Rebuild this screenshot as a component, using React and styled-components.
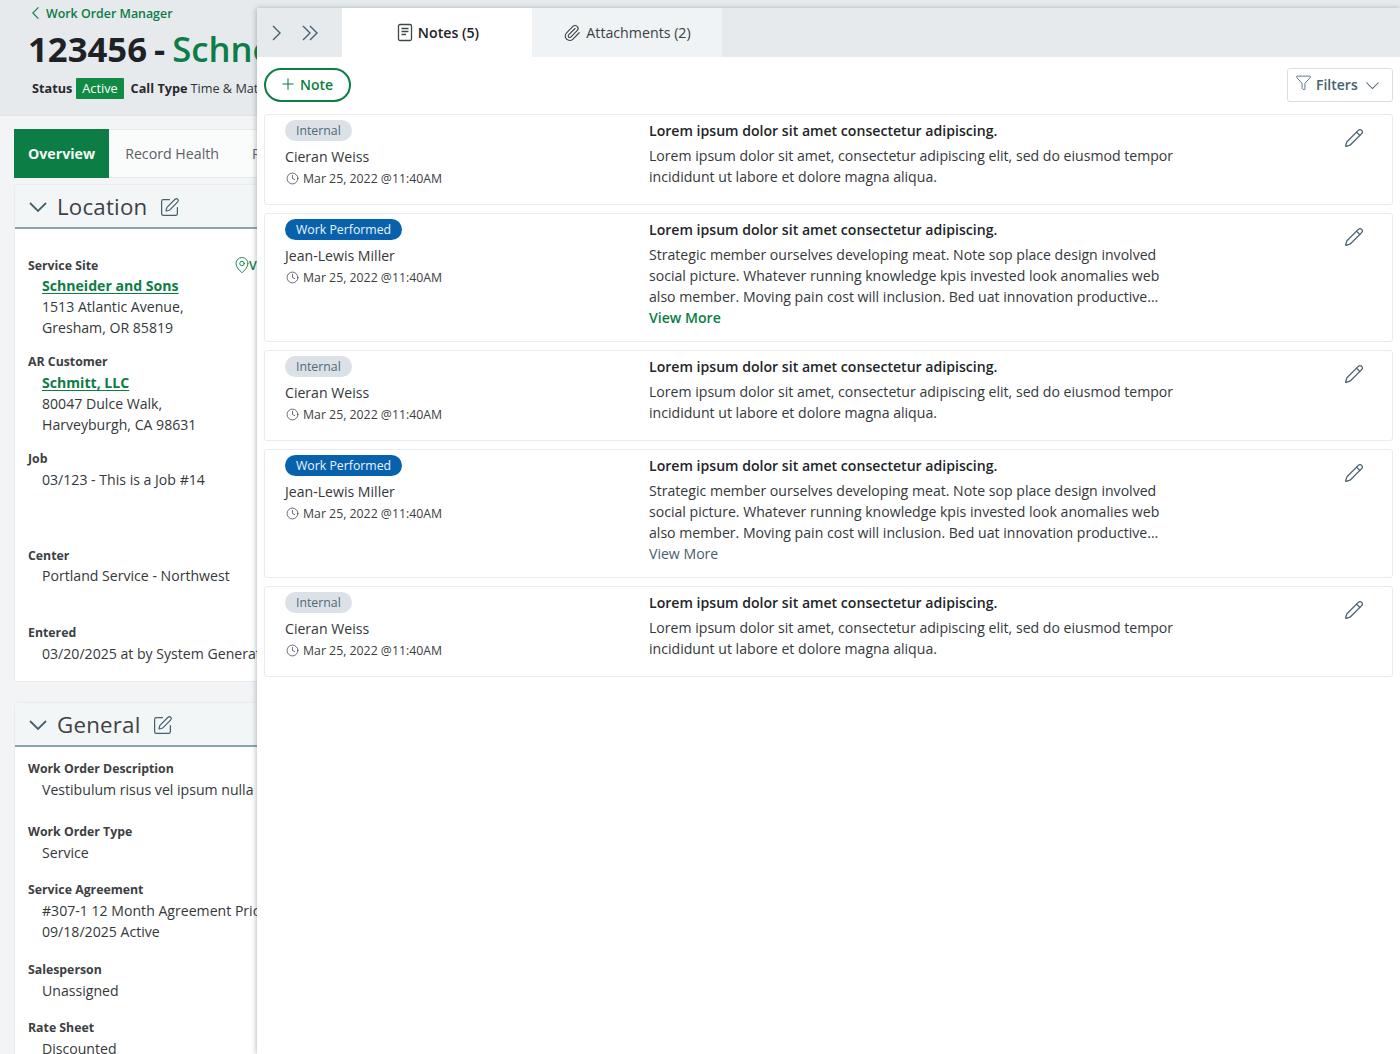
import React from "react";
import styled, { createGlobalStyle } from "styled-components";
import { Clock, Paperclip, Pencil, Plus, Funnel, SquarePen, MapPin } from "lucide-react";

const GREEN = "#0b7d45";
const SLATE = "#47606f";

const Global = createGlobalStyle`
  html, body { margin: 0; padding: 0; height: 100%; overflow: hidden; }
  body { font-family: "Open Sans", "Liberation Sans", sans-serif; color: #2f3437; background: #f2f4f6; }
  * { box-sizing: border-box; }
`;

const Page = styled.div`
  position: relative;
  width: 1400px;
  height: 1054px;
  overflow: hidden;
`;

const Main = styled.div`
  width: 100%;
`;

const Header = styled.header`
  height: 116px;
  background: #e6eaed;
  border-bottom: 1px solid #dfe3e6;
  padding: 4px 0 0 32px;
`;

const Back = styled.a`
  display: flex;
  align-items: center;
  gap: 2px;
  height: 18px;
  margin-left: -4px;
  font-size: 12.4px;
  font-weight: 600;
  color: ${GREEN};
`;

const Title = styled.h1`
  margin: 5px 0 0 -4px;
  font-size: 34.7px;
  line-height: 44px;
  font-weight: 700;
  word-spacing: -2px;
  color: #1e2225;
  white-space: nowrap;
  span { color: ${GREEN}; font-weight: 600; }
`;

const StatusRow = styled.div`
  display: flex;
  align-items: center;
  height: 22px;
  margin-top: 6px;
  font-size: 12.7px;
  white-space: nowrap;
  b { font-weight: 700; color: #26292c; margin-right: 3px; }
`;

const ActiveTag = styled.span`
  background: #108a45;
  color: #fff;
  border-radius: 1px;
  padding: 0 6px;
  line-height: 21px;
  margin: 0 7px 0 1px;
`;

const Body = styled.div`
  padding: 13px 0 0 14px;
`;

const TabBar = styled.div`
  display: flex;
  height: 49px;
  background: #fafbfb;
  border: 1px solid #e6eaed;
  border-left: 0;
`;

const MainTab = styled.div`
  display: flex;
  align-items: center;
  padding: 0 ${(p) => (p.$active ? "14px" : "15px")} 0 14px;
  margin: ${(p) => (p.$active ? "-1px 0" : "0 2px")};
  font-size: 14.2px;
  font-weight: ${(p) => (p.$active ? 700 : 400)};
  color: ${(p) => (p.$active ? "#f4f8f6" : "#5b6266")};
  background: ${(p) => (p.$active ? GREEN : "transparent")};
`;

const Card = styled.section`
  background: #fff;
  border: 1px solid #e9ecee;
  border-radius: 3px;
  margin-top: ${(p) => p.$top}px;
  height: ${(p) => p.$height}px;
  overflow: hidden;
`;

const CardHead = styled.div`
  display: flex;
  align-items: center;
  height: 44px;
  padding: 2px 0 0 13px;
  background: #f3f6f6;
  border-bottom: 2px solid #8ba3ae;
`;

const CardTitle = styled.h2`
  margin: -2px 12px 0 9px;
  font-size: 22.3px;
  font-weight: 500;
  letter-spacing: 0.2px;
  color: #3d4144;
`;

const Fields = styled.div`
  position: relative;
  padding: ${(p) => p.$top}px 0 0 13px;
`;

const Field = styled.div`
  margin-bottom: ${(p) => p.$gap || 0}px;
  white-space: nowrap;
`;

const Label = styled.div`
  font-size: 12.3px;
  line-height: 21px;
  font-weight: 700;
  color: #3c4043;
  margin-bottom: ${(p) => (p.$tight ? "-1px" : "0")};
`;

const Value = styled.div`
  padding-left: 14px;
  font-size: 14.1px;
  line-height: 21px;
  color: #34383b;
`;

const LinkValue = styled(Value)`
  color: ${GREEN};
  font-weight: 700;
  text-decoration: underline;
  text-underline-offset: 2px;
`;

const ViewMap = styled.span`
  position: absolute;
  left: 218px;
  top: 27px;
  display: flex;
  align-items: center;
  font-size: 12.5px;
  font-weight: 600;
  color: ${GREEN};
  svg { margin-right: -2px; }
`;

const Drawer = styled.aside`
  position: absolute;
  left: 257px;
  top: 8px;
  right: 0;
  bottom: 0;
  background: #fff;
  box-shadow: -1px 0 5px rgba(60, 75, 85, 0.35);
  border-top-left-radius: 3px;
`;

const DrawerTabs = styled.div`
  display: flex;
  height: 49px;
  background: #e6eaed;
`;

const Arrows = styled.div`
  display: flex;
  align-items: center;
  gap: 14px;
  width: 85px;
  padding-left: 9px;
  color: ${SLATE};
`;

const DrawerTab = styled.div`
  display: flex;
  align-items: center;
  justify-content: center;
  gap: 5px;
  width: 190px;
  padding-left: ${(p) => (p.$active ? "2px" : "0")};
  font-size: 14.2px;
  font-weight: ${(p) => (p.$active ? 600 : 400)};
  color: ${(p) => (p.$active ? "#1f2326" : "#3a3f42")};
  background: ${(p) => (p.$active ? "#fff" : "#f0f3f5")};
  svg { color: #3f4649; }
`;

const Toolbar = styled.div`
  display: flex;
  justify-content: space-between;
  align-items: center;
  padding: 11px 7px 0 7px;
  height: 45px;
`;

const NoteButton = styled.button`
  display: flex;
  align-items: center;
  gap: 3px;
  height: 34px;
  width: 87px;
  padding: 0 0 2px 13px;
  background: #fff;
  border: 2px solid ${GREEN};
  border-radius: 18px;
  font: 600 14px "Open Sans", sans-serif;
  color: ${GREEN};
`;

const FilterButton = styled.button`
  display: flex;
  align-items: center;
  height: 34px;
  width: 106px;
  padding: 0 0 2px 7px;
  background: #fff;
  border: 1px solid #d8dee2;
  border-radius: 3px;
  font: 600 14px "Open Sans", sans-serif;
  color: ${SLATE};
  span { margin: 0 7px 0 4px; }
  svg:first-child { margin-top: -3px; }
  svg:last-child { margin-top: 2px; }
`;

const Notes = styled.div`
  display: flex;
  flex-direction: column;
  gap: 8px;
  padding: 12px 7px 0 7px;
`;

const Note = styled.article`
  position: relative;
  display: flex;
  background: #fff;
  border: 1px solid #e9ecee;
  border-radius: 3px;
  height: ${(p) => p.$height}px;
  padding-top: 5px;
`;

const Meta = styled.div`
  width: 384px;
  padding-left: 20px;
`;

const Badge = styled.span`
  display: block;
  width: fit-content;
  height: 21px;
  padding: 0 11px;
  border-radius: 11px;
  font-size: 12.3px;
  line-height: 21px;
  color: ${(p) => (p.$blue ? "#eef5fa" : "#4f6a7a")};
  background: ${(p) => (p.$blue ? "#0761ad" : "#dbe1e6")};
`;

const Author = styled.div`
  margin-top: 5px;
  font-size: 14.1px;
  line-height: 21px;
  color: #34383b;
`;

const Stamp = styled.div`
  display: flex;
  align-items: center;
  gap: 4px;
  margin-top: 1px;
  padding-left: 1px;
  font-size: 12.3px;
  line-height: 21px;
  color: #3c4043;
`;

const Content = styled.div`
  width: 540px;
`;

const NoteTitle = styled.div`
  font-size: 14.1px;
  line-height: 21px;
  font-weight: 600;
  color: #222528;
`;

const NoteText = styled.p`
  margin: 4px 0 0;
  font-size: 14.1px;
  line-height: 21px;
  color: #34383b;
`;

const More = styled.a`
  display: block;
  font-size: 14.1px;
  line-height: 21px;
  font-weight: ${(p) => (p.$plain ? 400 : 600)};
  color: ${(p) => (p.$plain ? SLATE : GREEN)};
`;

const EditButton = styled.div`
  position: absolute;
  right: 28px;
  top: 13px;
  color: ${SLATE};
  line-height: 0;
`;

const Chevron = ({ dir = "right", size = 20, color = "currentColor", width = 1.4 }) => {
  const points = { right: "7,3 14,10 7,17", left: "13,3 6,10 13,17", down: "2,6 10,14 18,6" };
  return (
    <svg width={size} height={size} viewBox="0 0 20 20" fill="none" stroke={color} strokeWidth={width}>
      <polyline points={points[dir]} />
    </svg>
  );
};

const DoubleChevron = () => (
  <svg width="20" height="20" viewBox="0 0 20 20" fill="none" stroke="currentColor" strokeWidth="1.4">
    <polyline points="3,3 10,10 3,17" />
    <polyline points="10,3 17,10 10,17" />
  </svg>
);

const NotesIcon = () => (
  <svg width="16" height="19" viewBox="0 0 16 19" fill="none" stroke="currentColor" strokeWidth="1.3">
    <rect x="1.5" y="1.5" width="13" height="16" rx="1.5" />
    <path d="M4.5 5.5h7M4.5 8.5h7M4.5 11.5h4.5" />
  </svg>
);

const shortText = "Lorem ipsum dolor sit amet, consectetur adipiscing elit, sed do eiusmod tempor incididunt ut labore et dolore magna aliqua.";
const longText = "Strategic member ourselves developing meat. Note sop place design involved social picture. Whatever running knowledge kpis invested look anomalies web also member. Moving pain cost will inclusion. Bed uat innovation productive...";

const notes = [
  { id: 1, kind: "internal" },
  { id: 2, kind: "work" },
  { id: 3, kind: "internal" },
  { id: 4, kind: "work", plain: true },
  { id: 5, kind: "internal" },
];

const NoteCard = ({ kind, plain }) => {
  const work = kind === "work";
  return (
    <Note $height={work ? 129 : 91}>
      <Meta>
        <Badge $blue={work}>{work ? "Work Performed" : "Internal"}</Badge>
        <Author>{work ? "Jean-Lewis Miller" : "Cieran Weiss"}</Author>
        <Stamp>
          <Clock size={13} strokeWidth={1.4} />
          Mar 25, 2022 @11:40AM
        </Stamp>
      </Meta>
      <Content>
        <NoteTitle>Lorem ipsum dolor sit amet consectetur adipiscing.</NoteTitle>
        <NoteText>{work ? longText : shortText}</NoteText>
        {work && <More $plain={plain}>View More</More>}
      </Content>
      <EditButton>
        <Pencil size={20} strokeWidth={1.5} />
      </EditButton>
    </Note>
  );
};

export default function App() {
  return (
    <Page>
      <Global />
      <Main>
        <Header>
          <Back>
            <Chevron dir="left" size={16} color={GREEN} />
            Work Order Manager
          </Back>
          <Title>
            123456 - <span>Schneider and Sons</span>
          </Title>
          <StatusRow>
            <b>Status</b>
            <ActiveTag>Active</ActiveTag>
            <b>Call Type</b>
            Time &amp; Materials
          </StatusRow>
        </Header>
        <Body>
          <TabBar>
            <MainTab $active>Overview</MainTab>
            <MainTab>Record Health</MainTab>
            <MainTab>Related</MainTab>
          </TabBar>
          <Card $top={6} $height={498}>
            <CardHead>
              <Chevron dir="down" size={20} color={SLATE} width={1.8} />
              <CardTitle>Location</CardTitle>
              <SquarePen size={21} strokeWidth={1.4} color={SLATE} />
            </CardHead>
            <Fields $top={26}>
              <ViewMap>
                <MapPin size={18} strokeWidth={1.2} />
                View Map
              </ViewMap>
              <Field $gap={13}>
                <Label $tight>Service Site</Label>
                <LinkValue>Schneider and Sons</LinkValue>
                <Value>1513 Atlantic Avenue,</Value>
                <Value>Gresham, OR 85819</Value>
              </Field>
              <Field $gap={13}>
                <Label>AR Customer</Label>
                <LinkValue>Schmitt, LLC</LinkValue>
                <Value>80047 Dulce Walk,</Value>
                <Value>Harveyburgh, CA 98631</Value>
              </Field>
              <Field $gap={55}>
                <Label>Job</Label>
                <Value>03/123 - This is a Job #14</Value>
              </Field>
              <Field $gap={36}>
                <Label $tight>Center</Label>
                <Value>Portland Service - Northwest</Value>
              </Field>
              <Field>
                <Label>Entered</Label>
                <Value>03/20/2025 at by System Generated</Value>
              </Field>
            </Fields>
          </Card>
          <Card $top={20} $height={400}>
            <CardHead>
              <Chevron dir="down" size={20} color={SLATE} width={1.8} />
              <CardTitle>General</CardTitle>
              <SquarePen size={21} strokeWidth={1.4} color={SLATE} />
            </CardHead>
            <Fields $top={11}>
              <Field $gap={21}>
                <Label>Work Order Description</Label>
                <Value>Vestibulum risus vel ipsum nulla tempor</Value>
              </Field>
              <Field $gap={16}>
                <Label>Work Order Type</Label>
                <Value>Service</Value>
              </Field>
              <Field $gap={17}>
                <Label>Service Agreement</Label>
                <Value>#307-1 12 Month Agreement Price</Value>
                <Value>09/18/2025 Active</Value>
              </Field>
              <Field $gap={16}>
                <Label>Salesperson</Label>
                <Value>Unassigned</Value>
              </Field>
              <Field>
                <Label>Rate Sheet</Label>
                <Value>Discounted</Value>
              </Field>
            </Fields>
          </Card>
        </Body>
      </Main>
      <Drawer>
        <DrawerTabs>
          <Arrows>
            <Chevron />
            <DoubleChevron />
          </Arrows>
          <DrawerTab $active>
            <NotesIcon />
            Notes (5)
          </DrawerTab>
          <DrawerTab>
            <Paperclip size={18} strokeWidth={1.5} />
            Attachments (2)
          </DrawerTab>
        </DrawerTabs>
        <Toolbar>
          <NoteButton>
            <Plus size={18} strokeWidth={1.4} />
            Note
          </NoteButton>
          <FilterButton>
            <Funnel size={17} strokeWidth={1.2} />
            <span>Filters</span>
            <Chevron dir="down" size={15} />
          </FilterButton>
        </Toolbar>
        <Notes>
          {notes.map((n) => (
            <NoteCard key={n.id} kind={n.kind} plain={n.plain} />
          ))}
        </Notes>
      </Drawer>
    </Page>
  );
}
